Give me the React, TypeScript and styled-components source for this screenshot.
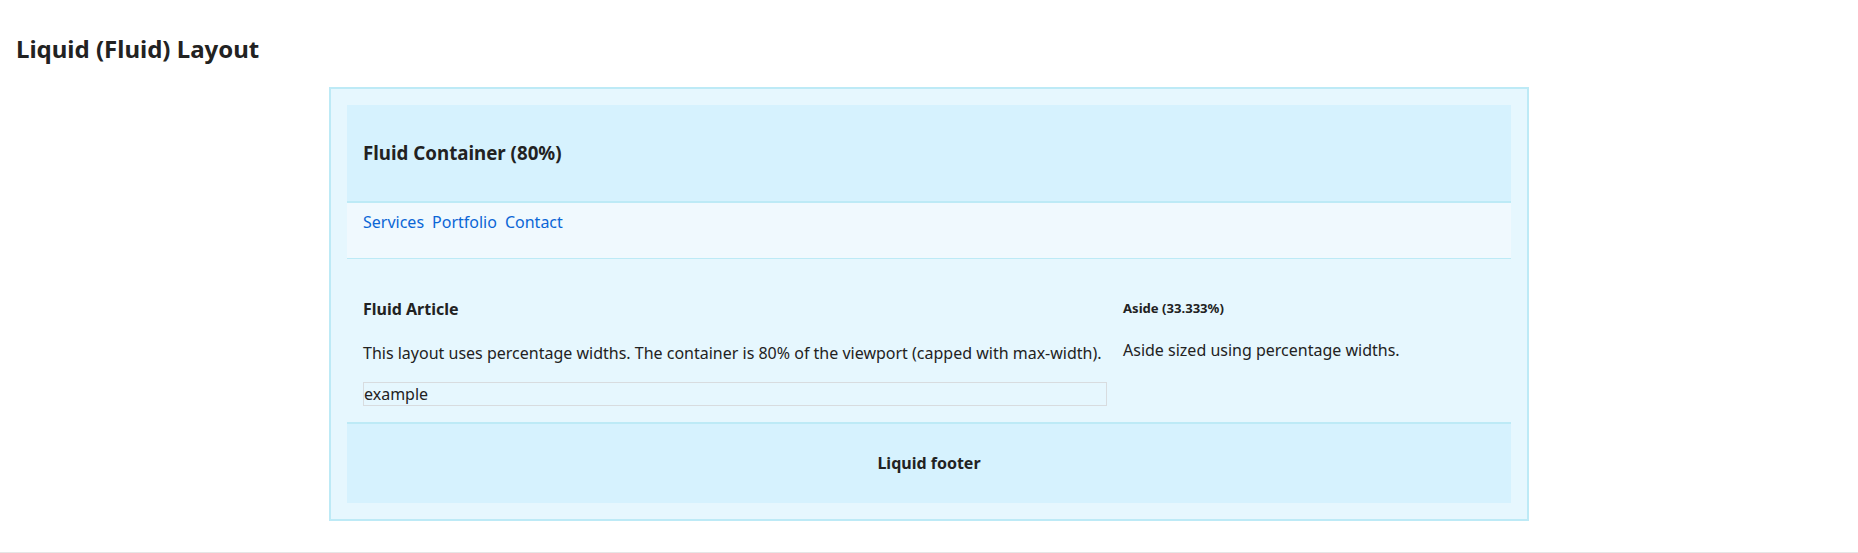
import React from "react";
import styled, { createGlobalStyle } from "styled-components";

const GlobalStyle = createGlobalStyle`
  html, body {
    margin: 0;
    padding: 0;
    background: #ffffff;
  }
  body {
    font-family: "Noto Sans", "Open Sans", "Liberation Sans", sans-serif;
    color: #222222;
  }
`;

const Page = styled.div`
  padding: 32px 16px 31px;
  border-bottom: 1px solid #e6e6e6;
`;

const PageTitle = styled.h1`
  margin: 0 0 22px;
  font-size: 24px;
  font-weight: 700;
  line-height: normal;
  color: #222222;
`;

const Container = styled.div`
  width: 80%;
  max-width: 1200px;
  margin: 0 auto;
  box-sizing: border-box;
  padding: 16px;
  background: #e6f7fe;
  border: 2px solid #bdeaf6;
`;

const Header = styled.header`
  height: 96px;
  display: flex;
  align-items: center;
  padding: 0 16px;
  background: #d6f2fe;
  border-bottom: 2px solid #bdeaf6;
`;

const HeaderTitle = styled.h2`
  margin: 0;
  font-size: 18.72px;
  font-weight: 700;
  line-height: 1.4;
`;

const Nav = styled.nav`
  display: flex;
  gap: 8px;
  height: 56px;
  box-sizing: border-box;
  padding: 8px 16px 0;
  background: #f0f9fe;
  border-bottom: 1px solid #bdeaf6;
`;

const NavLink = styled.a`
  font-size: 16px;
  line-height: 22.4px;
  color: #0b66d6;
  text-decoration: none;
`;

const Main = styled.main`
  display: flex;
  gap: 16px;
  padding: 39px 16px 16px;
`;

const Article = styled.article`
  flex: 0 1 66.667%;
  min-width: 0;
`;

const Aside = styled.aside`
  flex: 0 1 33.333%;
  min-width: 0;
`;

const ArticleTitle = styled.h3`
  margin: 0 0 22px;
  font-size: 16px;
  font-weight: 700;
  line-height: 22.4px;
`;

const AsideTitle = styled.h4`
  margin: 1px 0 22px;
  font-size: 13.1px;
  font-weight: 700;
  line-height: 18.2px;
`;

const Text = styled.p`
  margin: 0 0 17px;
  font-size: 16px;
  line-height: 22.4px;
`;

const Example = styled.div`
  border: 1px solid #d8dcdf;
  font-size: 16px;
  line-height: 22px;
`;

const Footer = styled.footer`
  height: 79px;
  display: flex;
  align-items: center;
  justify-content: center;
  background: #d6f2fe;
  border-top: 2px solid #bdeaf6;
  font-size: 16px;
  font-weight: 700;
`;

export default function App() {
  return (
    <>
      <GlobalStyle />
      <Page>
        <PageTitle>Liquid (Fluid) Layout</PageTitle>
        <Container>
          <Header>
            <HeaderTitle>Fluid Container (80%)</HeaderTitle>
          </Header>
          <Nav>
            <NavLink href="#">Services</NavLink>
            <NavLink href="#">Portfolio</NavLink>
            <NavLink href="#">Contact</NavLink>
          </Nav>
          <Main>
            <Article>
              <ArticleTitle>Fluid Article</ArticleTitle>
              <Text>
                This layout uses percentage widths. The container is 80% of the
                viewport (capped with max-width).
              </Text>
              <Example>example</Example>
            </Article>
            <Aside>
              <AsideTitle>Aside (33.333%)</AsideTitle>
              <Text>Aside sized using percentage widths.</Text>
            </Aside>
          </Main>
          <Footer>Liquid footer</Footer>
        </Container>
      </Page>
    </>
  );
}
